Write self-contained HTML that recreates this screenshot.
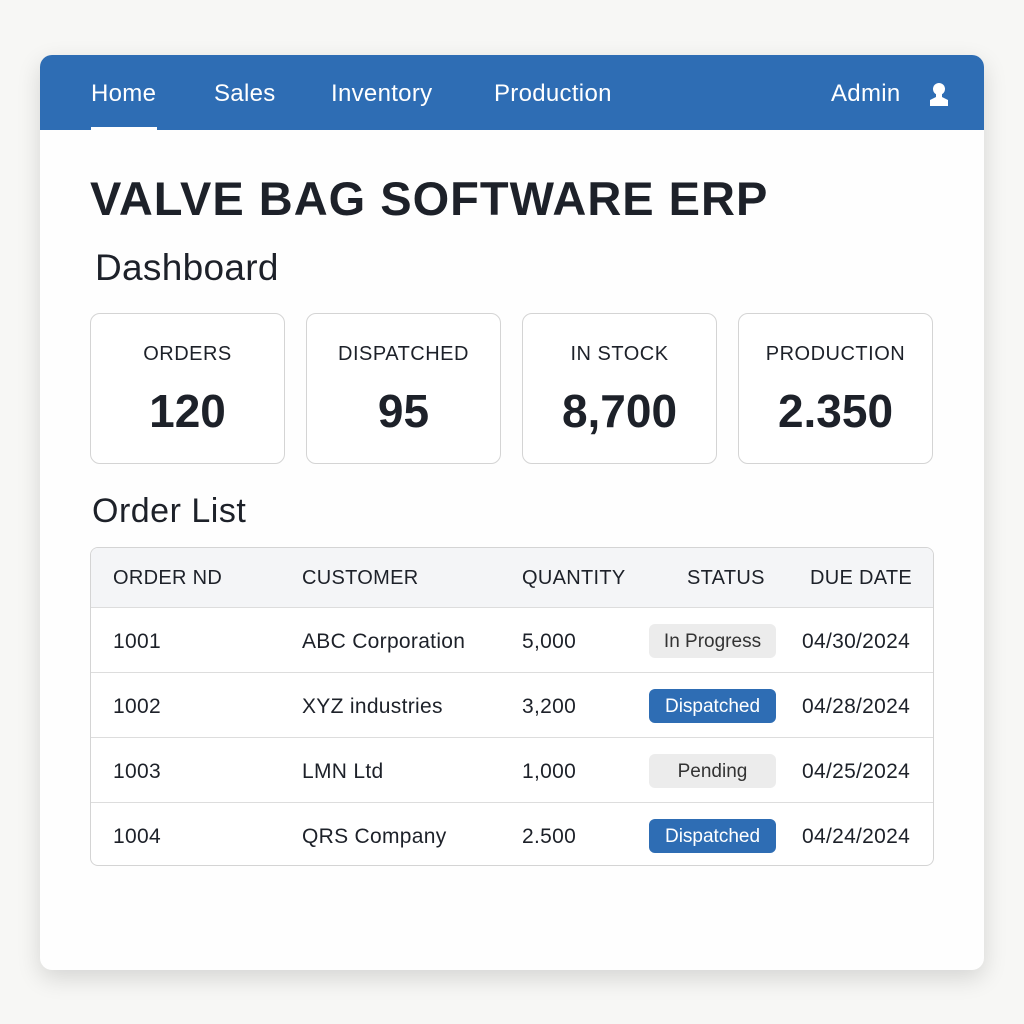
<!DOCTYPE html>
<html><head><meta charset="utf-8"><style>
*{margin:0;padding:0;box-sizing:border-box}
body{width:1024px;height:1024px;background:#f7f7f5;font-family:"Liberation Sans",sans-serif;color:#1d2129;position:relative;overflow:hidden}
.card{position:absolute;left:40px;top:55px;width:944px;height:915px;background:#fefefe;border-radius:12px;box-shadow:0 8px 24px rgba(0,0,0,.14);overflow:hidden}
.nav{position:absolute;left:0;top:0;width:944px;height:75px;background:#2e6db4}
.nav span{position:absolute;top:25px;color:#fff;font-size:24px;letter-spacing:.3px}
.ul{position:absolute;left:51px;top:72px;width:66px;height:3px;background:#fff}
.abs{position:absolute}
.stat{position:absolute;top:258px;width:195px;height:151px;border:1px solid #d4d4d4;border-radius:10px;text-align:center;background:#fff}
.stat .l{position:absolute;top:29px;width:100%;font-size:20px;letter-spacing:.5px}
.stat .n{position:absolute;top:70px;width:100%;font-size:46px;font-weight:bold}
.tbl{position:absolute;left:50px;top:492px;width:844px;height:319px;border:1px solid #d4d4d4;border-radius:8px;overflow:hidden;background:#fff}
.hd{position:absolute;left:0;top:0;width:100%;height:60px;background:#f4f5f7;border-bottom:1px solid #ddd}
.row{position:absolute;left:0;width:100%;height:65px;border-bottom:1px solid #ddd}
.c{position:absolute;font-size:21px;letter-spacing:.3px}
.hd .c{top:19px;font-size:20px}
.row .c{top:22px}
.b{position:absolute;left:558px;top:16px;width:127px;height:34px;border-radius:6px;font-size:19px;text-align:center;line-height:36px}
.g{background:#ececec;color:#333}
.bl{background:#2e6db4;color:#fff}
</style></head><body>
<div class="card">
<div class="nav">
<span style="left:51px">Home</span><span style="left:174px">Sales</span><span style="left:291px">Inventory</span><span style="left:454px">Production</span><span style="left:791px">Admin</span>
<svg class="abs" style="left:888px;top:27px" width="22" height="26" viewBox="0 0 22 26"><circle cx="11" cy="7" r="6" fill="#fff"/><path d="M8 12h6v3l6 3v6H2v-6l6-3z" fill="#fff"/></svg>
<div class="ul"></div>
</div>
<div class="abs" style="left:50px;top:116px;font-size:47px;font-weight:bold;letter-spacing:1px">VALVE BAG SOFTWARE ERP</div>
<div class="abs" style="left:55px;top:192px;font-size:37px;letter-spacing:.3px">Dashboard</div>
<div class="stat" style="left:50px"><div class="l">ORDERS</div><div class="n">120</div></div>
<div class="stat" style="left:266px"><div class="l">DISPATCHED</div><div class="n">95</div></div>
<div class="stat" style="left:482px"><div class="l">IN STOCK</div><div class="n">8,700</div></div>
<div class="stat" style="left:698px"><div class="l">PRODUCTION</div><div class="n">2.350</div></div>
<div class="abs" style="left:52px;top:437px;font-size:34px;letter-spacing:.5px">Order List</div>
<div class="tbl">
<div class="hd"><span class="c" style="left:22px">ORDER ND</span><span class="c" style="left:211px">CUSTOMER</span><span class="c" style="left:431px">QUANTITY</span><span class="c" style="left:596px">STATUS</span><span class="c" style="left:719px">DUE DATE</span></div>
<div class="row" style="top:60px"><span class="c" style="left:22px">1001</span><span class="c" style="left:211px">ABC Corporation</span><span class="c" style="left:431px">5,000</span><div class="b g">In Progress</div><span class="c" style="left:711px">04/30/2024</span></div>
<div class="row" style="top:125px"><span class="c" style="left:22px">1002</span><span class="c" style="left:211px">XYZ industries</span><span class="c" style="left:431px">3,200</span><div class="b bl">Dispatched</div><span class="c" style="left:711px">04/28/2024</span></div>
<div class="row" style="top:190px"><span class="c" style="left:22px">1003</span><span class="c" style="left:211px">LMN Ltd</span><span class="c" style="left:431px">1,000</span><div class="b g">Pending</div><span class="c" style="left:711px">04/25/2024</span></div>
<div class="row" style="top:255px;border-bottom:none"><span class="c" style="left:22px">1004</span><span class="c" style="left:211px">QRS Company</span><span class="c" style="left:431px">2.500</span><div class="b bl">Dispatched</div><span class="c" style="left:711px">04/24/2024</span></div>
</div>
</div>
</body></html>
